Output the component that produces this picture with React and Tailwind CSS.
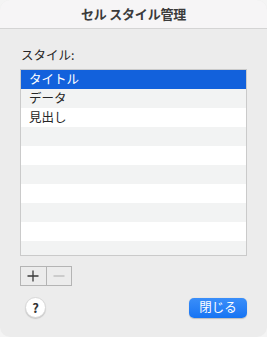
import React from "react";

const rows = ["タイトル", "データ", "見出し", "", "", "", "", "", "", ""];

const App = () => {
  return (
    <div
      className="w-[267px] h-[337px] bg-[#f4f4f4] overflow-hidden"
      style={{ fontFamily: '"Noto Sans CJK JP", "Noto Sans", sans-serif' }}
    >
      <div className="w-full h-full rounded-[10px] bg-[#ececec] overflow-hidden flex flex-col">
        {/* Title bar */}
        <div className="h-[29px] shrink-0 bg-[#f6f5f6] border-b border-[#d4d4d4] flex items-center justify-center">
          <span className="text-[13px] font-bold text-[#3b3b3b] tracking-[-0.2px]">
            セル スタイル管理
          </span>
        </div>

        <div className="flex-1 flex flex-col px-[20px]">
          <p className="mt-[18px] text-[12.5px] leading-[16px] text-[#262626] pl-[1px]">
            スタイル:
          </p>

          {/* Style list */}
          <div className="mt-[6px] h-[187px] border border-[#cacaca] bg-white overflow-hidden">
            {rows.map((r, i) => (
              <div
                key={i}
                className={
                  "h-[19px] flex items-center px-[8px] text-[12.5px] leading-none " +
                  (i === 0
                    ? "bg-[#1261dc] text-white"
                    : i % 2 === 1
                    ? "bg-[#f2f3f3] text-[#262626]"
                    : "bg-white text-[#262626]")
                }
              >
                {r}
              </div>
            ))}
          </div>

          {/* + / - */}
          <div className="mt-[10px] flex w-[52px] h-[20px] border border-[#b4b4b4]">
            <div className="flex-1 flex items-center justify-center border-r border-[#b4b4b4] bg-[#ececec]">
              <svg width="12" height="12" viewBox="0 0 12 12">
                <path d="M6 0.5V11.5M0.5 6H11.5" stroke="#3a3a3a" strokeWidth="1.3" />
              </svg>
            </div>
            <div className="flex-1 flex items-center justify-center bg-[#ececec]">
              <svg width="12" height="12" viewBox="0 0 12 12">
                <path d="M0.5 6H11.5" stroke="#c2c2c2" strokeWidth="1.3" />
              </svg>
            </div>
          </div>

          {/* Footer */}
          <div className="mt-[11px] flex items-center justify-between">
            <div className="ml-[5px] w-[21px] h-[21px] rounded-full bg-white border border-[#d8d8d8] shadow-[0_1px_1px_rgba(0,0,0,0.15)] flex items-center justify-center">
              <span className="text-[13px] font-bold text-[#333] leading-none">?</span>
            </div>
            <button className="w-[58px] h-[20px] rounded-[5px] bg-gradient-to-b from-[#3a8ef9] to-[#1574f3] text-white text-[12.5px] leading-none flex items-center justify-center shadow-[0_0.5px_1px_rgba(0,0,0,0.2)]">
              閉じる
            </button>
          </div>
        </div>
      </div>
    </div>
  );
};

export default App;
